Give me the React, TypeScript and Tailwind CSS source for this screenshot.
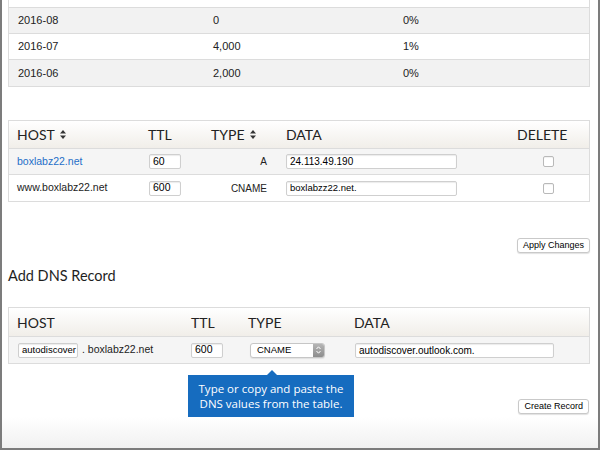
import React from "react";

const body = { fontFamily: '"Liberation Sans", Arial, sans-serif' };
const head = { fontFamily: 'Lato, "Open Sans", sans-serif' };

function SortIcon() {
  return (
    <svg width="6" height="9" viewBox="0 0 6 9" className="ml-[5px] inline-block">
      <path d="M0 3.5 L3 0 L6 3.5 Z" fill="#333" />
      <path d="M0 5.5 L3 9 L6 5.5 Z" fill="#333" />
    </svg>
  );
}

function TextInput({ value, w, size = "text-[10.5px]" }: { value: string; w: string; size?: string }) {
  return (
    <div
      className={`flex h-[15px] items-center overflow-hidden whitespace-nowrap rounded-[2px] border border-[#cfcfcf] bg-white pl-[3px] shadow-[inset_0_1px_1px_rgba(0,0,0,0.08)] ${w} ${size} text-black`}
      style={body}
    >
      {value}
    </div>
  );
}

function Checkbox() {
  return <div className="h-[11px] w-[11px] rounded-[2px] border border-[#b9b9b9] bg-white shadow-[inset_0_1px_1px_rgba(0,0,0,0.06)]" />;
}

function Button({ label }: { label: string }) {
  return (
    <div
      className="flex h-[15px] items-center rounded-[3px] border border-[#c9c9c9] bg-white px-[5px] text-[9px] text-black shadow-[0_1px_1px_rgba(0,0,0,0.12)]"
      style={body}
    >
      {label}
    </div>
  );
}

const usage = [
  { month: "2016-08", count: "0", pct: "0%", shade: true },
  { month: "2016-07", count: "4,000", pct: "1%", shade: false },
  { month: "2016-06", count: "2,000", pct: "0%", shade: true },
];

const records = [
  { host: "boxlabz22.net", link: true, ttl: "60", type: "A", data: "24.113.49.190", shade: true },
  { host: "www.boxlabz22.net", link: false, ttl: "600", type: "CNAME", data: "boxlabzz22.net.", shade: false },
];

export default function App() {
  return (
    <div className="h-[450px] w-[600px] overflow-hidden bg-white">
      <div className="flex h-full flex-col border-x-2 border-b-2 border-[#7c7c7c] bg-gradient-to-b from-white from-[93%] to-[#f1f1f1] pl-[6px] pr-[8px]">
        {/* Usage table */}
        <div className="border-x border-b border-[#dcdcdc] text-[11px] text-[#222]" style={body}>
          <div className="h-[8px] border-b border-[#dcdcdc] bg-white" />
          {usage.map((r) => (
            <div
              key={r.month}
              className={`grid h-[26px] grid-cols-[195px_190px_1fr] items-center border-b border-[#dcdcdc] last:border-b-0 pl-[9px] ${r.shade ? "bg-[#f2f2f2]" : "bg-white"}`}
            >
              <span>{r.month}</span>
              <span>{r.count}</span>
              <span>{r.pct}</span>
            </div>
          ))}
        </div>

        {/* DNS records */}
        <div className="mt-[33px] border border-[#dcdcdc]">
          <div
            className="grid h-[28px] grid-cols-[131px_63px_75px_231px_1fr] items-center border-b border-[#dcdcdc] bg-gradient-to-b from-white to-[#f1eee9] pl-[8px] text-[14px] text-[#222]"
            style={head}
          >
            <span className="flex items-center">HOST<SortIcon /></span>
            <span>TTL</span>
            <span className="flex items-center">TYPE<SortIcon /></span>
            <span>DATA</span>
            <span>DELETE</span>
          </div>
          {records.map((r) => (
            <div
              key={r.host}
              className={`grid h-[26px] grid-cols-[131px_63px_75px_231px_1fr] items-center border-b border-[#dcdcdc] last:border-b-0 pl-[8px] text-[10.5px] ${r.shade ? "bg-[#f5f5f5]" : "bg-white"}`}
              style={body}
            >
              <span className={r.link ? "text-[#1e6fc8]" : "text-[#222]"}>{r.host}</span>
              <div className="pl-[1px]">
                <TextInput value={r.ttl} w="w-[32px]" />
              </div>
              <span className="pr-[19px] text-right text-[10px] text-[#222]">{r.type}</span>
              <TextInput value={r.data} w="w-[171px]" size={r.link ? "text-[10px]" : "text-[9.5px]"} />
              <div className="flex w-[60px] justify-center pl-[3px]">
                <Checkbox />
              </div>
            </div>
          ))}
        </div>

        <div className="mt-[36px] flex justify-end">
          <Button label="Apply Changes" />
        </div>

        <h2 className="mt-[14px] text-[14.5px] leading-[18px] text-[#1e1e1e]" style={head}>
          Add DNS Record
        </h2>

        {/* Add record */}
        <div className="relative mt-[22px]">
          <div className="border border-[#dcdcdc]">
            <div
              className="grid h-[29px] grid-cols-[174px_57px_106px_1fr] items-center border-b border-[#dcdcdc] bg-gradient-to-b from-white to-[#f1eee9] pl-[8px] text-[14px] text-[#222]"
              style={head}
            >
              <span>HOST</span>
              <span>TTL</span>
              <span>TYPE</span>
              <span>DATA</span>
            </div>
            <div
              className="grid h-[26px] grid-cols-[174px_57px_106px_1fr] items-center bg-[#f5f5f5] pl-[8px] text-[10.5px] text-[#222]"
              style={body}
            >
              <div className="flex items-center pl-[1px]">
                <TextInput value="autodiscover" w="w-[60px]" size="text-[9.5px]" />
                <span className="ml-[4px]">. boxlabz22.net</span>
              </div>
              <TextInput value="600" w="w-[32px]" />
              <div className="pl-[2px]">
                <div className="flex h-[15px] w-[75px] items-center justify-between rounded-[3px] border border-[#c6c6c6] bg-white pl-[6px] text-[9.5px] text-black shadow-[0_1px_1px_rgba(0,0,0,0.08)]">
                  <span>CNAME</span>
                  <div className="flex h-full w-[11px] items-center justify-center rounded-r-[2px] bg-gradient-to-b from-[#b5b5b5] to-[#8d8d8d]">
                    <svg width="5" height="8" viewBox="0 0 5 8">
                      <path d="M0.5 3 L2.5 0.8 L4.5 3" stroke="#fff" strokeWidth="1" fill="none" />
                      <path d="M0.5 5 L2.5 7.2 L4.5 5" stroke="#fff" strokeWidth="1" fill="none" />
                    </svg>
                  </div>
                </div>
              </div>
              <div className="pl-[1px]">
                <TextInput value="autodiscover.outlook.com." w="w-[199px]" size="text-[10px]" />
              </div>
            </div>
          </div>

          {/* Tooltip */}
          <div className="absolute left-[180px] top-[68px] w-[166px]">
            <div
              className="relative whitespace-nowrap bg-[#166cbf] py-[6px] text-center text-[11.5px] leading-[15px] text-white"
              style={{ fontFamily: '"Open Sans", "Noto Sans", sans-serif' }}
            >
              <div className="absolute -top-[5px] left-[78px] h-0 w-0 border-x-[6px] border-b-[6px] border-x-transparent border-b-[#166cbf]" />
              Type or copy and paste the
              <br />
              DNS values from the table.
            </div>
          </div>

          <div className="mt-[35px] flex justify-end pr-[1px]">
            <Button label="Create Record" />
          </div>
        </div>
      </div>
    </div>
  );
}
